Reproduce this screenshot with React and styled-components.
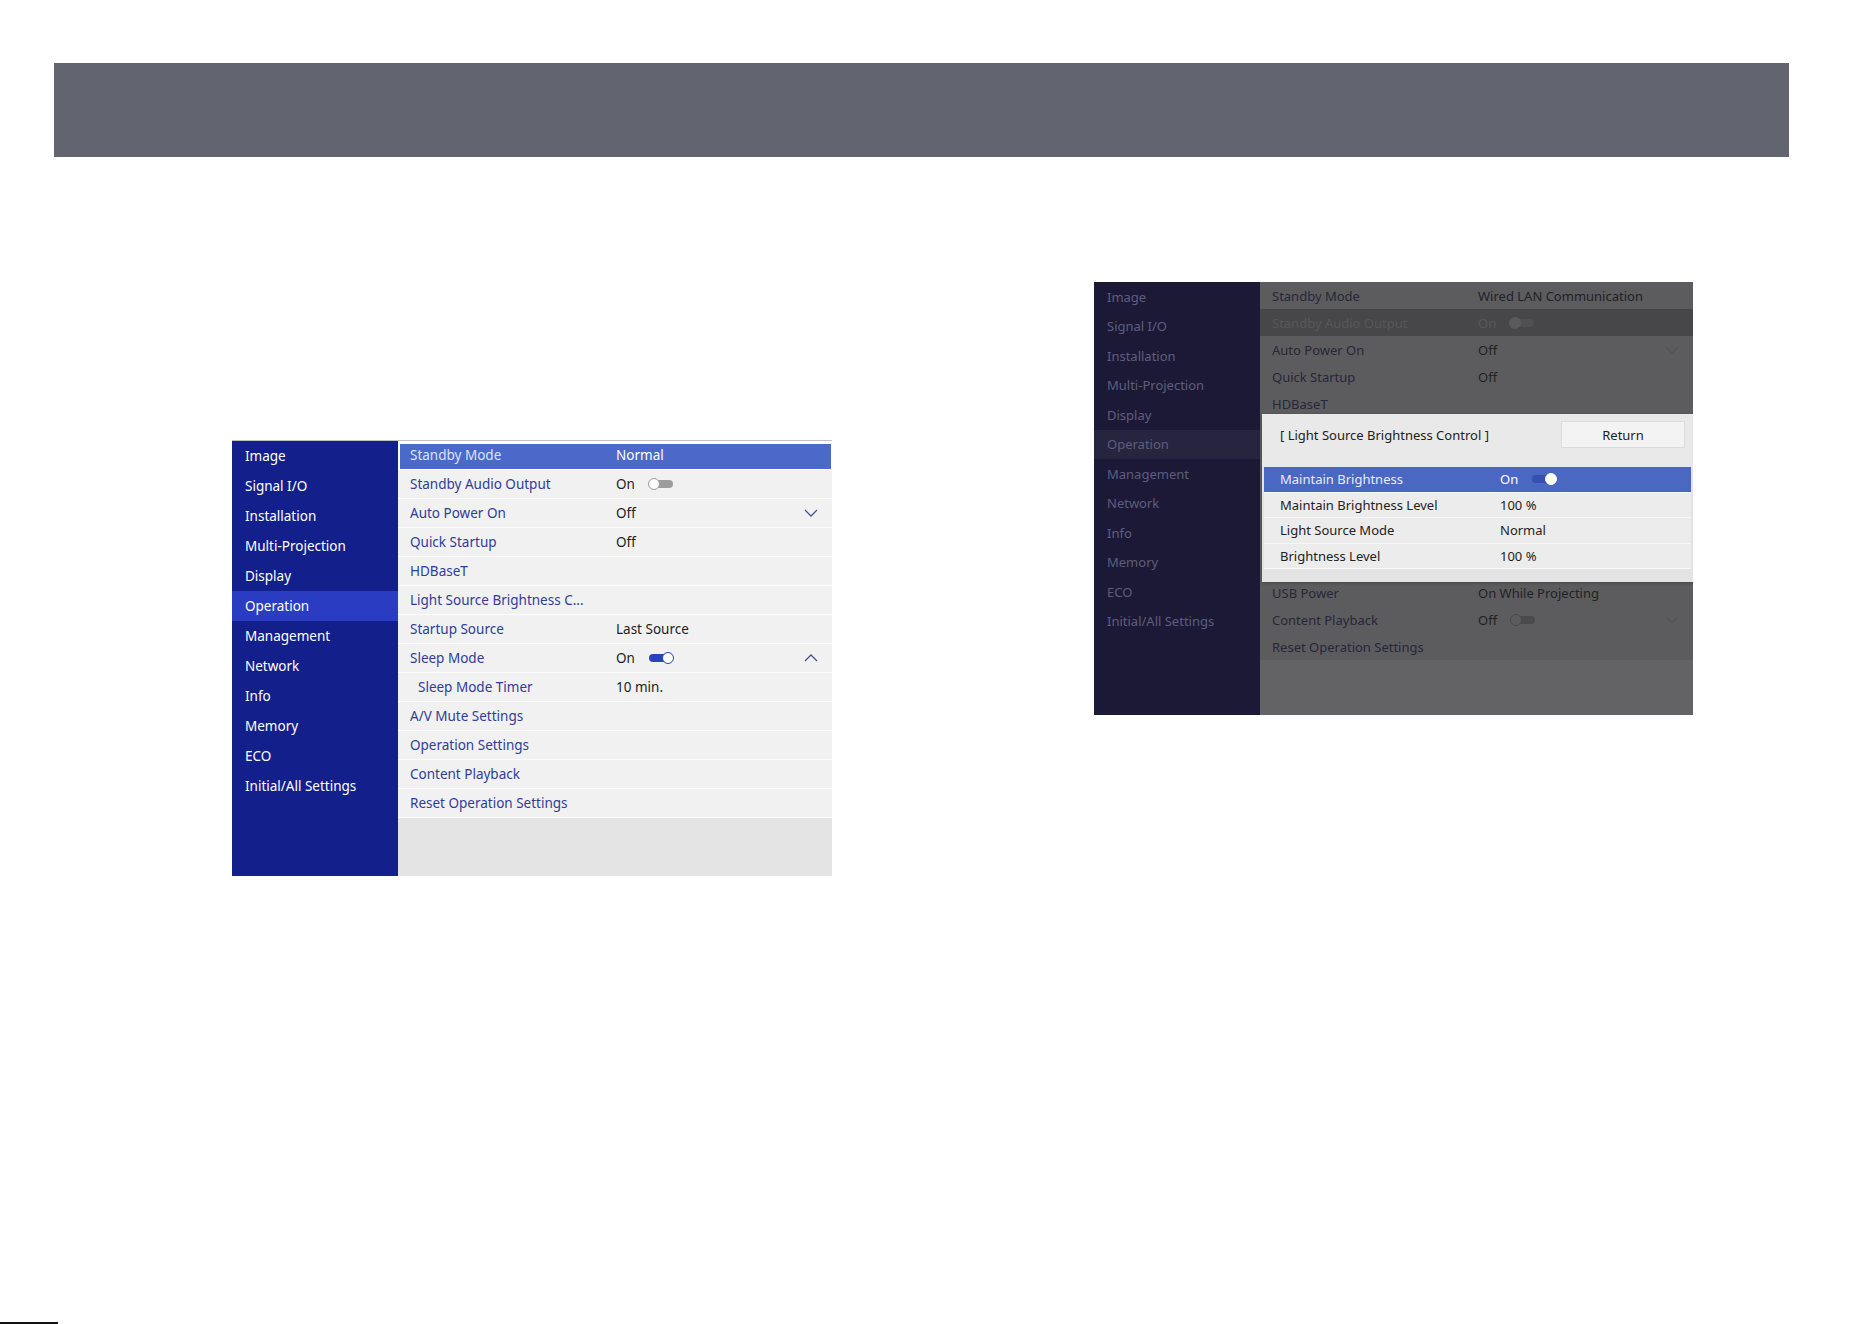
import React from 'react';
import styled, { createGlobalStyle, css } from 'styled-components';

const GlobalStyle = createGlobalStyle`
  body {
    margin: 0;
    background: #fff;
    font-family: 'Noto Sans', 'Open Sans', sans-serif;
  }
`;

const Page = styled.div`
  width: 1872px;
  min-height: 1324px;
  display: flex;
  flex-direction: column;
  box-sizing: border-box;
`;

const HeaderBar = styled.div`
  margin: 63px 83px 0 54px;
  height: 94px;
  background: #62646f;
`;

const Figures = styled.div`
  display: flex;
  align-items: flex-start;
`;

const Shot = styled.div`
  position: relative;
  display: grid;
  grid-template-columns: 166px 1fr;
  width: ${(p) => p.$width}px;
  height: ${(p) => p.$height}px;
  margin-left: ${(p) => p.$left}px;
  margin-top: ${(p) => p.$top}px;
  border-top: ${(p) => (p.$dim ? 'none' : '1px solid #c2c2c2')};
  overflow: hidden;
`;

const Side = styled.div`
  background: ${(p) => (p.$dim ? '#1c1937' : '#131f8b')};
  display: flex;
  flex-direction: column;
`;

const SideItem = styled.div`
  height: ${(p) => (p.$dim ? 29.5 : 30)}px;
  flex-shrink: 0;
  display: flex;
  align-items: center;
  padding-left: 13px;
  font-size: ${(p) => (p.$dim ? 13 : 13.5)}px;
  color: ${(p) => (p.$dim ? '#5f5d7c' : '#fff')};
  background: ${(p) =>
    p.$active ? (p.$dim ? '#27243f' : '#2a3cc1') : 'transparent'};
`;

const List = styled.div`
  position: relative;
  display: flex;
  flex-direction: column;
  background: ${(p) => (p.$dim ? '#636365' : '#e4e4e4')};
`;

const Row = styled.div`
  display: grid;
  grid-template-columns: 206px 1fr 24px;
  align-items: center;
  box-sizing: border-box;
  flex-shrink: 0;
  height: ${(p) => (p.$dim ? 27 : 29)}px;
  padding: 0 14px 0 12px;
  font-size: ${(p) => (p.$dim ? 13 : 13.5)}px;
  background: ${(p) => (p.$dim ? '#5c5c5e' : '#f1f1f1')};
  border-bottom: ${(p) => (p.$dim ? 'none' : '1px solid #fdfdfd')};
  ${(p) =>
    p.$selected &&
    css`
      background: #4a69c9;
      box-shadow: inset 2px 3px 0 #fff, inset -1px 0 0 #fff;
    `}
  ${(p) =>
    p.$muted &&
    css`
      background: #474749;
    `}
`;

/* rows of the dimmed list that sit under the popup */
const CoveredRows = styled.div`
  flex-shrink: 0;
  height: ${(p) => p.$count * 27}px;
  background: #5c5c5e;
`;

const Label = styled.span`
  color: ${(p) =>
    p.$selected ? '#dde3f6' : p.$muted ? '#575759' : p.$dim ? '#27273a' : '#2f3c99'};
  padding-left: ${(p) => (p.$indent ? 8 : 0)}px;
  white-space: nowrap;
`;

const Value = styled.span`
  display: flex;
  align-items: center;
  gap: 13px;
  color: ${(p) =>
    p.$selected ? '#fff' : p.$muted ? '#575759' : p.$dim ? '#222224' : '#1e1e1e'};
  white-space: nowrap;
`;

const ChevronCell = styled.span`
  display: flex;
  justify-content: flex-end;
`;

const Track = styled.span`
  position: relative;
  display: inline-block;
  width: 26px;
  height: 12px;
  &::before {
    content: '';
    position: absolute;
    left: 1px;
    right: 1px;
    top: 2px;
    height: 8px;
    border-radius: 4px;
    background: ${(p) => p.$color};
  }
  &::after {
    content: '';
    position: absolute;
    top: 0;
    ${(p) => (p.$on ? 'right: 0;' : 'left: 0;')}
    width: 10px;
    height: 10px;
    border-radius: 50%;
    background: ${(p) => p.$knob};
    border: 1px solid ${(p) => p.$ring};
  }
`;

const Chevron = ({ up, color }) => (
  <svg width="14" height="8" viewBox="0 0 14 8">
    <polyline
      points={up ? '1,7 7,1 13,7' : '1,1 7,7 13,1'}
      fill="none"
      stroke={color}
      strokeWidth="1.3"
    />
  </svg>
);

const Popup = styled.div`
  position: absolute;
  left: 2px;
  right: 0;
  top: 132px;
  height: 168px;
  background: #e3e3e3;
  display: flex;
  flex-direction: column;
  box-shadow: 0 1px 3px rgba(0, 0, 0, 0.25);
`;

const PopupHead = styled.div`
  height: 53px;
  flex-shrink: 0;
  display: flex;
  align-items: flex-start;
  justify-content: space-between;
  padding: 7px 8px 0 18px;
  box-sizing: border-box;
  background: #e9e9e9;
  font-size: 13px;
  color: #222;
`;

const PopupTitle = styled.span`
  margin-top: 5px;
`;

const ReturnButton = styled.div`
  width: 124px;
  height: 27px;
  display: flex;
  align-items: center;
  justify-content: center;
  background: #f3f3f3;
  border: 1px solid #dcdcdc;
  box-sizing: border-box;
  font-size: 13px;
  color: #222;
`;

const PopRow = styled.div`
  display: grid;
  grid-template-columns: 220px 1fr;
  align-items: center;
  box-sizing: border-box;
  flex-shrink: 0;
  height: 25.5px;
  margin: 0 2px;
  padding-left: 16px;
  font-size: 13px;
  color: ${(p) => (p.$selected ? '#e6ebfa' : '#222')};
  background: ${(p) => (p.$selected ? '#4a68c1' : '#ececec')};
  border-bottom: 1px solid #f8f8f8;
`;

const Footer = styled.div`
  margin-top: auto;
  width: 58px;
  height: 2px;
  background: #111;
`;

const sideItems = [
  'Image',
  'Signal I/O',
  'Installation',
  'Multi-Projection',
  'Display',
  'Operation',
  'Management',
  'Network',
  'Info',
  'Memory',
  'ECO',
  'Initial/All Settings',
];

const leftRows = [
  { label: 'Standby Mode', value: 'Normal', selected: true },
  { label: 'Standby Audio Output', value: 'On', toggle: 'off' },
  { label: 'Auto Power On', value: 'Off', chevron: 'down' },
  { label: 'Quick Startup', value: 'Off' },
  { label: 'HDBaseT' },
  { label: 'Light Source Brightness C...' },
  { label: 'Startup Source', value: 'Last Source' },
  { label: 'Sleep Mode', value: 'On', toggle: 'on', chevron: 'up' },
  { label: 'Sleep Mode Timer', value: '10 min.', indent: true },
  { label: 'A/V Mute Settings' },
  { label: 'Operation Settings' },
  { label: 'Content Playback' },
  { label: 'Reset Operation Settings' },
];

const rightTop = [
  { label: 'Standby Mode', value: 'Wired LAN Communication' },
  { label: 'Standby Audio Output', value: 'On', toggle: 'muted', muted: true },
  { label: 'Auto Power On', value: 'Off', chevron: 'down' },
  { label: 'Quick Startup', value: 'Off' },
  { label: 'HDBaseT' },
];

const rightBottom = [
  { label: 'USB Power', value: 'On While Projecting' },
  { label: 'Content Playback', value: 'Off', toggle: 'dimoff', chevron: 'down' },
  { label: 'Reset Operation Settings' },
];

const popRows = [
  { label: 'Maintain Brightness', value: 'On', selected: true },
  { label: 'Maintain Brightness Level', value: '100 %' },
  { label: 'Light Source Mode', value: 'Normal' },
  { label: 'Brightness Level', value: '100 %' },
];

const toggleStyles = {
  off: { $on: false, $color: '#9b9b9b', $knob: '#fff', $ring: '#9b9b9b' },
  on: { $on: true, $color: '#2a43b9', $knob: '#fff', $ring: '#2a43b9' },
  muted: { $on: false, $color: '#505052', $knob: '#5a5a5c', $ring: '#5a5a5c' },
  dimoff: { $on: false, $color: '#4a4a4c', $knob: '#5c5c5e', $ring: '#4a4a4c' },
  pop: { $on: true, $color: '#3550b0', $knob: '#fff', $ring: '#fff' },
};

const Menu = ({ rows, dim }) => (
  <>
    {rows.map((r) => (
      <Row key={r.label} $dim={dim} $selected={r.selected} $muted={r.muted}>
        <Label $dim={dim} $selected={r.selected} $muted={r.muted} $indent={r.indent}>
          {r.label}
        </Label>
        <Value $dim={dim} $selected={r.selected} $muted={r.muted}>
          {r.value}
          {r.toggle && <Track {...toggleStyles[r.toggle]} />}
        </Value>
        <ChevronCell>
          {r.chevron && (
            <Chevron up={r.chevron === 'up'} color={dim ? '#545456' : '#4a5391'} />
          )}
        </ChevronCell>
      </Row>
    ))}
  </>
);

const App = () => {
  return (
    <Page>
      <GlobalStyle />
      <HeaderBar />
      <Figures>
        <Shot $width={600} $height={435} $left={232} $top={283}>
          <Side>
            {sideItems.map((s) => (
              <SideItem key={s} $active={s === 'Operation'}>
                {s}
              </SideItem>
            ))}
          </Side>
          <List>
            <Menu rows={leftRows} />
          </List>
        </Shot>
        <Shot $dim $width={599} $height={433} $left={262} $top={125}>
          <Side $dim>
            {sideItems.map((s) => (
              <SideItem key={s} $dim $active={s === 'Operation'}>
                {s}
              </SideItem>
            ))}
          </Side>
          <List $dim>
            <Menu rows={rightTop} dim />
            <CoveredRows $count={6} />
            <Menu rows={rightBottom} dim />
            <Popup>
              <PopupHead>
                <PopupTitle>[ Light Source Brightness Control ]</PopupTitle>
                <ReturnButton>Return</ReturnButton>
              </PopupHead>
              {popRows.map((r) => (
                <PopRow key={r.label} $selected={r.selected}>
                  <span>{r.label}</span>
                  <Value $selected={r.selected}>
                    {r.value}
                    {r.selected && <Track {...toggleStyles.pop} />}
                  </Value>
                </PopRow>
              ))}
            </Popup>
          </List>
        </Shot>
      </Figures>
      <Footer />
    </Page>
  );
};

export default App;
